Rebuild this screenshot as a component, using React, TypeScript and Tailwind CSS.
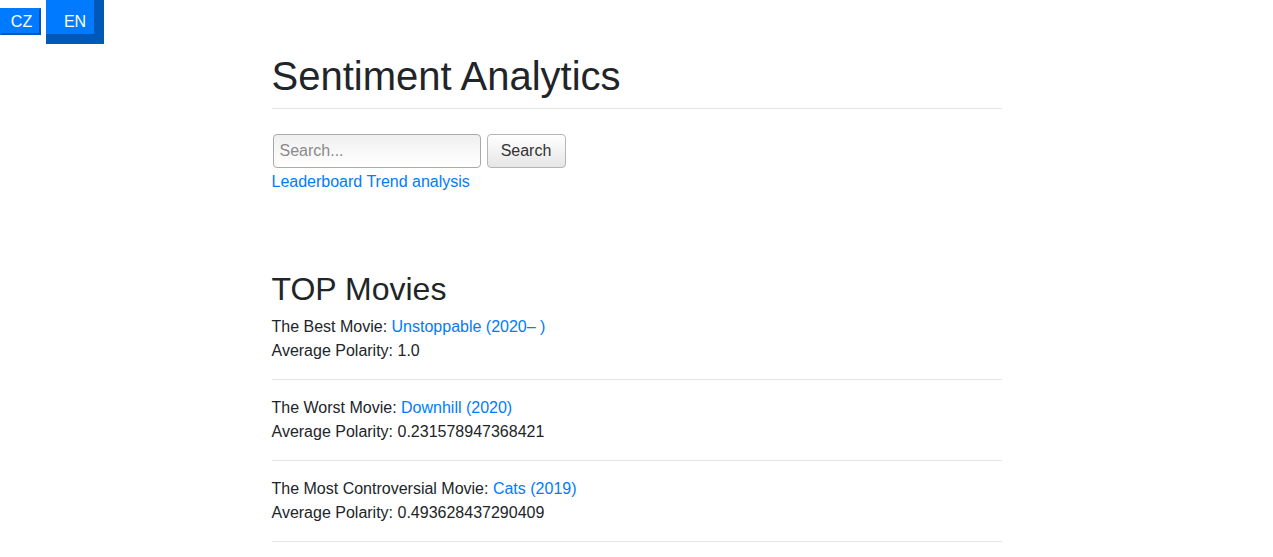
import React from "react";

const movies = [
  { label: "The Best Movie", title: "Unstoppable (2020– )", polarity: "1.0" },
  { label: "The Worst Movie", title: "Downhill (2020)", polarity: "0.231578947368421" },
  { label: "The Most Controversial Movie", title: "Cats (2019)", polarity: "0.493628437290409" },
];

export default function App() {
  return (
    <div className="min-h-[557px] bg-white text-[#212529] text-[16px] leading-6 font-['Liberation_Sans',Arial,sans-serif]">
      <div className="flex items-start gap-[5px]">
        <button className="mt-2 h-[27px] w-[41px] pl-[2px] bg-[#007bff] text-white text-[16px] leading-none border-[2px] border-t-[#007bff] border-l-[#007bff] border-r-[#0059b8] border-b-[#0059b8]">
          CZ
        </button>
        <button className="h-[44px] w-[58px] pl-[10px] pt-[10px] bg-[#007bff] text-white text-[16px] leading-none border-[10px] border-t-0 border-l-0 border-r-[#0059b8] border-b-[#0059b8]">
          EN
        </button>
      </div>

      <div className="w-[730px] mx-auto">
        <h1 className="mt-[8px] text-[40px] leading-[48px] font-normal">Sentiment Analytics</h1>
        <hr className="mt-[8px] mb-[25px] border-t border-[rgba(0,0,0,0.1)]" />

        <form className="flex gap-[6px]" onSubmit={(e) => e.preventDefault()}>
          <input
            type="text"
            placeholder="Search..."
            className="ml-px w-[208px] h-[34px] px-[6px] rounded-[4px] border border-[#a9a9a9] bg-gradient-to-b from-[#f0f0f0] to-white text-[16px] placeholder:text-[#8a8a8a] outline-none"
          />
          <button
            type="submit"
            className="w-[79px] h-[34px] rounded-[4px] border border-[#b5b5b5] bg-gradient-to-b from-white to-[#e6e6e6] text-[16px] text-[#333]"
          >
            Search
          </button>
        </form>
        <div className="mt-[2px]">
          <a href="#" className="text-[#007bff]">Leaderboard</a>{" "}
          <a href="#" className="text-[#007bff]">Trend analysis</a>
        </div>

        <h2 className="mt-[76px] mb-[7px] text-[32px] leading-[38px] font-normal">TOP Movies</h2>
        {movies.map((m) => (
          <div key={m.label}>
            <div>
              {m.label}: <a href="#" className="text-[#007bff]">{m.title}</a>
            </div>
            <div>Average Polarity: {m.polarity}</div>
            <hr className="my-[16px] border-t border-[rgba(0,0,0,0.1)]" />
          </div>
        ))}
      </div>
    </div>
  );
}
